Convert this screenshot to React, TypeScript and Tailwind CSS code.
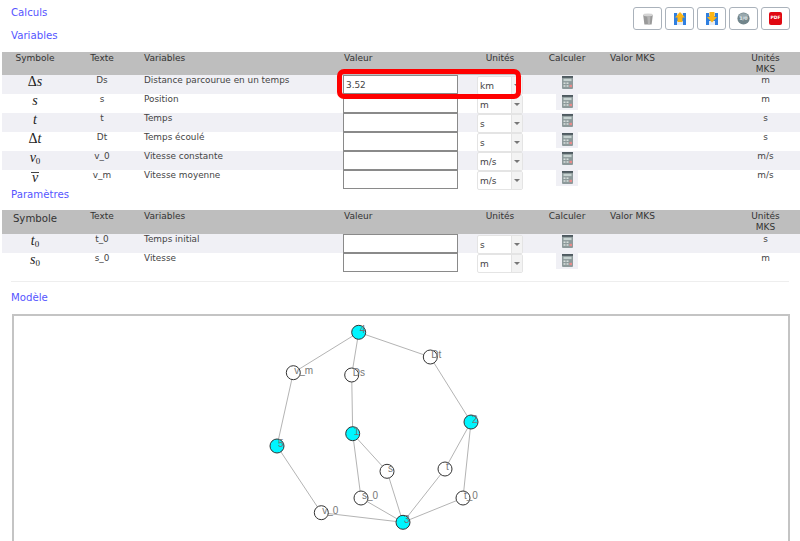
const sans = "font-['DejaVu_Sans','Liberation_Sans',sans-serif]";

const columns = "grid grid-cols-[66px_68px_207px_125px_64px_70px_130px_67px]";

type Row = { symbol: React.ReactNode; text: string; name: string; unit: string; mks: string; value?: string };

function Sym({ children }: { children: React.ReactNode }) {
  return <span className="-mt-[1px] font-['Liberation_Serif',serif] text-[14px] leading-[15px] text-[#222]">{children}</span>;
}

function Sub({ base, sub }: { base: string; sub: string }) {
  return (
    <Sym>
      <i>{base}</i>
      <span className="relative top-[2px] text-[9px] leading-none">{sub}</span>
    </Sym>
  );
}

const variables: Row[] = [
  { symbol: <Sym>Δ<i>s</i></Sym>, text: "Ds", name: "Distance parcourue en un temps", unit: "km", mks: "m", value: "3.52" },
  { symbol: <Sym><i>s</i></Sym>, text: "s", name: "Position", unit: "m", mks: "m" },
  { symbol: <Sym><i>t</i></Sym>, text: "t", name: "Temps", unit: "s", mks: "s" },
  { symbol: <Sym>Δ<i>t</i></Sym>, text: "Dt", name: "Temps écoulé", unit: "s", mks: "s" },
  { symbol: <Sub base="v" sub="0" />, text: "v_0", name: "Vitesse constante", unit: "m/s", mks: "m/s" },
  {
    symbol: (
      <Sym>
        <i className="mt-[3px] inline-block border-t border-[#444] px-px leading-[10px]">v</i>
      </Sym>
    ),
    text: "v_m",
    name: "Vitesse moyenne",
    unit: "m/s",
    mks: "m/s",
  },
];

const parametres: Row[] = [
  { symbol: <Sub base="t" sub="0" />, text: "t_0", name: "Temps initial", unit: "s", mks: "s" },
  { symbol: <Sub base="s" sub="0" />, text: "s_0", name: "Vitesse", unit: "m", mks: "m" },
];

const nodes = [
  { x: 358.7, y: 332.3, label: "4", on: true },
  { x: 293.3, y: 372.7, label: "v_m" },
  { x: 351.7, y: 375, label: "Ds" },
  { x: 430.3, y: 357, label: "Dt" },
  { x: 471, y: 422, label: "2", on: true },
  { x: 352.7, y: 433.7, label: "1", on: true },
  { x: 277, y: 446, label: "5", on: true },
  { x: 387, y: 471.3, label: "s" },
  { x: 445, y: 469, label: "t" },
  { x: 361, y: 498, label: "s_0" },
  { x: 463, y: 498, label: "t_0" },
  { x: 321.3, y: 512.7, label: "v_0" },
  { x: 403, y: 522.3, label: "3", on: true },
];

const edges = [
  [0, 1], [0, 2], [0, 3], [1, 6], [2, 5], [3, 4], [4, 8], [4, 10],
  [5, 7], [5, 9], [6, 11], [7, 12], [8, 12], [9, 12], [10, 12], [11, 12],
];

function CalcIcon() {
  return (
    <svg width="11" height="13" viewBox="0 0 11 14" preserveAspectRatio="none">
      <rect width="11" height="14" rx="1" fill="#8d9a9b" />
      <rect x="0" y="0" width="11" height="2" fill="#4e5a60" />
      <rect x="1.5" y="3" width="8" height="2.5" fill="#c6d2d0" />
      <rect x="1.5" y="7" width="2" height="1.5" fill="#dfe6e4" />
      <rect x="4.5" y="7" width="2" height="1.5" fill="#dfe6e4" />
      <rect x="1.5" y="10" width="2" height="1.5" fill="#dfe6e4" />
      <rect x="4.5" y="10" width="2" height="1.5" fill="#dfe6e4" />
      <rect x="7.5" y="9.5" width="2.5" height="2.5" fill="#e88a8a" />
    </svg>
  );
}

function Floppy({ down }: { down?: boolean }) {
  return (
    <svg width="12" height="13" viewBox="0 0 12 13">
      <rect x="0" y="1" width="12" height="12" fill="#2f7fe0" />
      <rect x="3" y="9" width="6" height="4" fill="#e4ecf6" />
      <rect x="3" y="1" width="6" height="3" fill="#e4ecf6" />
      {down ? (
        <path d="M3.5 0h5v5H11L6 10.5 1 5h2.5z" fill="#fdb515" />
      ) : (
        <path d="M6 0l5 5.5H8.5V10h-5V5.5H1z" fill="#fdb515" />
      )}
    </svg>
  );
}

function ToolButton({ children }: { children: React.ReactNode }) {
  return (
    <button className="flex h-[23px] w-[29px] items-center justify-center rounded-[3px] border border-[#aab2bb] bg-white">
      {children}
    </button>
  );
}

function UnitSelect({ unit }: { unit: string }) {
  return (
    <div className="ml-[9px] mt-px flex h-[19px] w-[46px] rounded-[2px] border border-[#e4e4e4] bg-white">
      <span className="flex-1 pl-[2px] text-[9px] leading-[18px] text-[#444]">{unit}</span>
      <span className="flex w-[11px] items-center justify-center border-l border-[#e4e4e4] bg-[#f3f3f3]">
        <span className="h-0 w-0 border-x-[3px] border-t-[3px] border-x-transparent border-t-[#777]" />
      </span>
    </div>
  );
}

function DataRow({ row, shaded }: { row: Row; shaded: boolean }) {
  return (
    <div className={`${columns} h-[19px] ${shaded ? "bg-[#f0f0f5]" : "bg-white"} text-[8.9px] leading-[11px] text-[#444]`}>
      <div className="flex justify-center">{row.symbol}</div>
      <div className="text-center">{row.text}</div>
      <div className="pl-2">{row.name}</div>
      <div>
        <input
          readOnly
          value={row.value ?? ""}
          className="h-[19px] w-[115px] border border-[#8a8a8a] bg-white pl-[2px] text-[8.9px] text-[#444] outline-none"
        />
      </div>
      <UnitSelect unit={row.unit} />
      <div className="pl-[24px]">
        <span className="flex h-[16px] w-[22px] items-start justify-center bg-[#f0f0f5] pt-px">
          <CalcIcon />
        </span>
      </div>
      <div />
      <div className="text-center">{row.mks}</div>
    </div>
  );
}

function DataTable({ rows, bigSymbol }: { rows: Row[]; bigSymbol?: boolean }) {
  return (
    <div className="ml-[2px]">
      <div className={`${columns} ${bigSymbol ? "h-[24px]" : "h-[23px]"} bg-[#bebebe] text-[9px] leading-[11px] text-[#333]`}>
        <div className={bigSymbol ? "pt-[2px] text-center text-[10.2px] leading-[13px]" : "pt-px text-center"}>Symbole</div>
        <div className="pt-px text-center">Texte</div>
        <div className="pl-2 pt-px">Variables</div>
        <div className="pl-px pt-px">Valeur</div>
        <div className="pt-px text-center">Unités</div>
        <div className="pt-px text-center">Calculer</div>
        <div className="pl-2 pt-px">Valor MKS</div>
        <div className="px-4 pt-px text-center">Unités MKS</div>
      </div>
      {rows.map((row, i) => (
        <DataRow key={row.text} row={row} shaded={i % 2 === 0} />
      ))}
    </div>
  );
}

function Title({ children, className }: { children: React.ReactNode; className?: string }) {
  return <a className={`ml-[11px] block text-[10.2px] leading-[14px] text-[#5555ff] ${className ?? ""}`}>{children}</a>;
}

export default function App() {
  return (
    <div className={`${sans} relative h-[541px] w-[800px] overflow-hidden bg-white`}>
      <div className="flex h-[52px] justify-between">
        <div>
          <Title className="mt-[6px]">Calculs</Title>
          <Title className="mt-[9px]">Variables</Title>
        </div>
        <div className="mr-[10px] mt-[7px] flex gap-[3px]">
          <ToolButton>
            <svg width="12" height="12" viewBox="0 0 14 15">
              <path d="M1 2.5h12L11.5 14.5h-9z" fill="#9a9a9a" />
              <ellipse cx="7" cy="2.5" rx="6" ry="1.8" fill="#d4d4d4" />
              <path d="M6 4h4l-.6 10H7z" fill="#b5b5b5" />
            </svg>
          </ToolButton>
          <ToolButton><Floppy /></ToolButton>
          <ToolButton><Floppy down /></ToolButton>
          <ToolButton>
            <svg width="13" height="13" viewBox="0 0 16 16">
              <circle cx="8" cy="8" r="7.5" fill="#71858b" />
              <ellipse cx="8" cy="5" rx="5.5" ry="3.5" fill="#98a8ad" />
              <text x="8" y="10" textAnchor="middle" fontSize="6" fontWeight="bold" fill="#e6ecee">1/0</text>
            </svg>
          </ToolButton>
          <ToolButton>
            <span className="flex h-[13px] w-[13px] items-center justify-center rounded-[2px] bg-[#e00812] text-[4.5px] font-bold leading-none text-white">
              PDF
            </span>
          </ToolButton>
        </div>
      </div>

      <DataTable rows={variables} />

      <Title className="mt-[-1px]">Paramètres</Title>
      <div className="mt-[8px]">
        <DataTable rows={parametres} bigSymbol />
      </div>

      <hr className="mx-[11px] mt-[9px] border-[#eeeeee]" />
      <Title className="mt-[9px]">Modèle</Title>

      <div className="mx-[12px] mt-[9px] h-[300px] w-[778px] border-2 border-[#c4c4c4]">
        <svg className="h-full w-full" viewBox="14 316 774 296">
          {edges.map(([a, b]) => (
            <line key={`${a}-${b}`} x1={nodes[a].x} y1={nodes[a].y} x2={nodes[b].x} y2={nodes[b].y} stroke="#b4b4b4" strokeWidth="1" />
          ))}
          {nodes.map((n) => (
            <g key={n.label}>
              <circle cx={n.x} cy={n.y} r="7" fill={n.on ? "#00f5ff" : "#ffffff"} stroke="#333" strokeWidth="1" />
              <text x={n.x + 1} y={n.y + 1} fontSize="10" fontFamily="Liberation Sans, sans-serif" fill="#777">
                {n.label}
              </text>
            </g>
          ))}
        </svg>
      </div>

      {/* red highlight over the first row */}
      <div className="absolute left-[337px] top-[69px] h-[30px] w-[184px] rounded-[7px] border-[5px] border-[#ff0000]" />
    </div>
  );
}
